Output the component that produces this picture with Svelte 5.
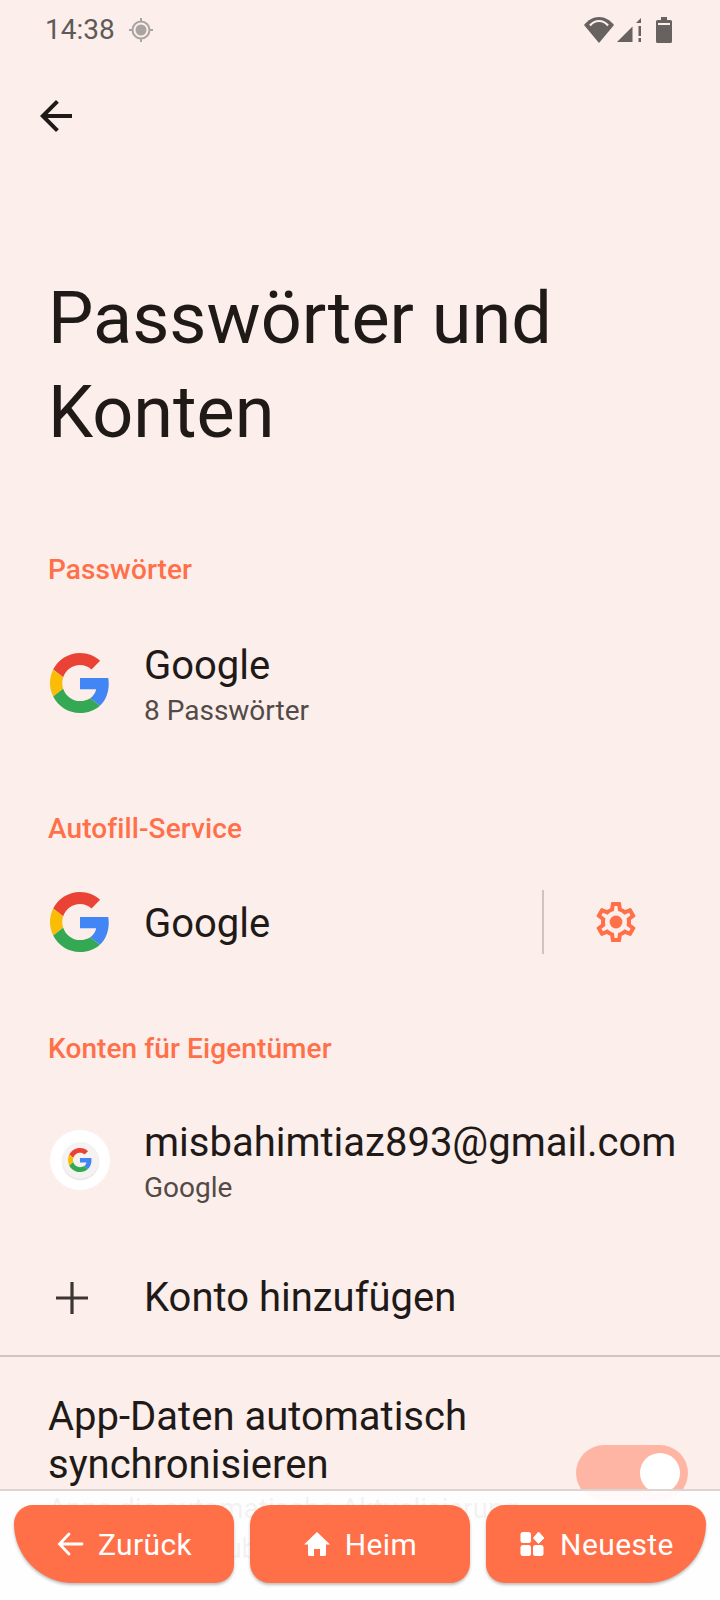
<script>
  const buttons = [
    { label: 'Zurück', icon: 'back', cls: 'first' },
    { label: 'Heim', icon: 'home', cls: '' },
    { label: 'Neueste', icon: 'recent', cls: 'last' },
  ];
</script>

{#snippet gLogo(size)}
  <svg width={size} height={size} viewBox="0 0 48 48">
    <path fill="#ea4335" d="M24 9.5c3.54 0 6.71 1.22 9.21 3.6l6.85-6.85C35.9 2.38 30.47 0 24 0 14.62 0 6.51 5.38 2.56 13.22l7.98 6.19C12.43 13.72 17.74 9.5 24 9.5z"/>
    <path fill="#4285f4" d="M46.98 24.55c0-1.57-.15-3.09-.38-4.55H24v9.02h12.94c-.58 2.96-2.26 5.48-4.78 7.18l7.73 6c4.51-4.18 7.09-10.36 7.09-17.65z"/>
    <path fill="#fbbc05" d="M10.53 28.59c-.48-1.45-.76-2.99-.76-4.59s.27-3.14.76-4.59l-7.98-6.19C.92 16.46 0 20.12 0 24c0 3.88.92 7.54 2.56 10.78l7.97-6.19z"/>
    <path fill="#34a853" d="M24 48c6.48 0 11.93-2.13 15.89-5.81l-7.73-6c-2.15 1.45-4.92 2.3-8.16 2.3-6.26 0-11.57-4.22-13.47-9.91l-7.98 6.19C6.51 42.62 14.62 48 24 48z"/>
  </svg>
{/snippet}

<div class="screen">
  <div class="status">
    <span class="time">14:38</span>
    <svg class="loc" width="26" height="26" viewBox="0 0 26 26">
      <circle cx="13" cy="13" r="8.5" fill="none" stroke="#a9a3a1" stroke-width="2"/>
      <circle cx="13" cy="13" r="5.5" fill="#a9a3a1"/>
      <path d="M13 1v4M13 21v4M1 13h4M21 13h4" stroke="#a9a3a1" stroke-width="2"/>
    </svg>
    <div class="status-right">
      <svg width="30" height="26" viewBox="0 0 30 26">
        <path d="M15 26 0 8C4 3 9 0 15 0s11 3 15 8z" fill="#676260"/>
        <path d="M6 8.5C8.500 5.500 11.500 4 15 4s6.500 1.500 9 4.500" fill="none" stroke="#fceeea" stroke-width="2.200"/>
      </svg>
      <svg width="25" height="26" viewBox="0 0 25 26">
        <path d="M0 25 15.500 9.500V25z" fill="#676260"/>
        <path d="M19 6 24 1v5z" fill="#676260"/>
        <rect x="21.500" y="9" width="2.500" height="10" fill="#676260"/>
        <rect x="21.500" y="21" width="2.500" height="4" fill="#676260"/>
      </svg>
      <svg class="batt" width="16" height="26" viewBox="0 0 16 26">
        <path d="M5 0h6v3h3.500a1.500 1.500 0 0 1 1.500 1.500V24.500a1.500 1.500 0 0 1-1.500 1.500H1.500A1.500 1.500 0 0 1 0 24.500V4.500A1.500 1.500 0 0 1 1.500 3H5z" fill="#676260"/>
        <rect x="2" y="6" width="12" height="2" fill="#fceeea"/>
      </svg>
    </div>
  </div>

  <div class="toolbar">
    <svg width="48" height="48" viewBox="0 0 24 24">
      <path fill="#1f1a18" d="M20 11H7.830l5.590-5.590L12 4l-8 8 8 8 1.410-1.410L7.830 13H20v-2z"/>
    </svg>
  </div>

  <h1>Passwörter und Konten</h1>

  <h2 class="first-head">Passwörter</h2>
  <div class="row two-line">
    <div class="icon">{@render gLogo(60)}</div>
    <div class="texts">
      <div class="title">Google</div>
      <div class="sub">8 Passwörter</div>
    </div>
  </div>

  <h2 class="autofill-head">Autofill-Service</h2>
  <div class="row autofill">
    <div class="icon">{@render gLogo(60)}</div>
    <div class="grow"><div class="title">Google</div></div>
    <div class="vline"></div>
    <svg class="gear" width="48" height="48" viewBox="0 0 24 24">
      <path fill="#ff7049" fill-rule="evenodd" d="M19.430 12.980c.04-.32.07-.64.07-.98 0-.34-.03-.66-.07-.98l2.110-1.650c.19-.15.24-.42.12-.64l-2-3.460c-.09-.16-.26-.25-.44-.25-.06 0-.12.01-.17.03l-2.490 1c-.52-.4-1.080-.73-1.690-.98l-.38-2.650C14.460 2.180 14.250 2 14 2h-4c-.25 0-.46.18-.49.42l-.38 2.650c-.61.25-1.170.59-1.690.98l-2.490-1c-.06-.02-.12-.03-.18-.03-.17 0-.34.09-.43.25l-2 3.460c-.13.22-.07.49.12.64l2.110 1.650c-.04.32-.07.65-.07.98 0 .33.03.66.07.98l-2.110 1.650c-.19.15-.24.42-.12.64l2 3.460c.09.16.26.25.44.25.06 0 .12-.01.17-.03l2.490-1c.52.4 1.080.73 1.690.98l.38 2.650c.03.24.24.42.49.42h4c.25 0 .46-.18.49-.42l.38-2.650c.61-.25 1.170-.59 1.690-.98l2.490 1c.06.02.12.03.18.03.17 0 .34-.09.43-.25l2-3.460c.12-.22.07-.49-.12-.64l-2.110-1.650zm-1.980-1.710c.04.31.05.52.05.73 0 .21-.02.43-.05.73l-.14 1.130.89.7 1.080.84-.7 1.210-1.270-.51-1.040-.42-.9.68c-.43.32-.84.56-1.250.73l-1.060.43-.16 1.130-.2 1.350h-1.400l-.19-1.350-.16-1.130-1.060-.43c-.43-.18-.83-.41-1.230-.71l-.91-.7-1.060.43-1.270.51-.7-1.210 1.080-.84.89-.7-.14-1.130c-.03-.31-.05-.54-.05-.74s.02-.43.05-.73l.14-1.130-.89-.7-1.080-.84.7-1.210 1.270.51 1.040.42.9-.68c.43-.32.84-.56 1.250-.73l1.060-.43.16-1.130.2-1.350h1.390l.19 1.350.16 1.130 1.060.43c.43.18.83.41 1.230.71l.91.7 1.060-.43 1.270-.51.7 1.210-1.070.85-.89.7.14 1.130z"/>
      <circle cx="12" cy="12" r="3.200" fill="#ff7049"/>
    </svg>
  </div>

  <h2 class="konten-head">Konten für Eigentümer</h2>
  <div class="row two-line account">
    <div class="icon">
      <div class="avatar">
        <div class="avatar-inner">{@render gLogo(24)}</div>
      </div>
    </div>
    <div class="texts">
      <div class="title">misbahimtiaz893@gmail.com</div>
      <div class="sub">Google</div>
    </div>
  </div>

  <div class="row add">
    <div class="icon plus">
      <svg width="48" height="48" viewBox="0 0 48 48">
        <path d="M24 8v32M8 24h32" stroke="#3c3533" stroke-width="3.200"/>
      </svg>
    </div>
    <div class="title">Konto hinzufügen</div>
  </div>

  <div class="hline"></div>

  <div class="sync">
    <div class="sync-text">
      <div class="title sync-title">App-Daten automatisch synchronisieren</div>
      <div class="sub sync-sub">Apps die automatische Aktualisierung von Daten erlauben</div>
    </div>
    <div class="switch"><div class="thumb"></div></div>
  </div>

  <div class="bottom">
    {#each buttons as b}
      <div class="btn {b.cls}">
        {#if b.icon === 'back'}
          <svg width="28" height="28" viewBox="0 0 28 28">
            <path d="M26 14H4M13 4 3.500 14 13 24" fill="none" stroke="#fff" stroke-width="2.800" stroke-linecap="round"/>
          </svg>
        {:else if b.icon === 'home'}
          <svg width="28" height="28" viewBox="0 0 28 28">
            <path fill="#fff" d="M14 2 1 14.500H5v10A1.500 1.500 0 0 0 6.500 26H11v-7h6v7h4.500a1.500 1.500 0 0 0 1.500-1.500v-10h4z"/>
          </svg>
        {:else}
          <svg width="28" height="28" viewBox="0 0 28 28">
            <rect x="2.500" y="2" width="10.500" height="11" rx="2.500" fill="#fff"/>
            <path d="M20.500 2 26 8l-5.500 5.500L15.500 8z" fill="#fff" stroke="#fff" stroke-linejoin="round"/>
            <rect x="2.500" y="15" width="10.500" height="11" rx="2.500" fill="#fff"/>
            <rect x="15" y="15" width="10.500" height="11" rx="2.500" fill="#fff"/>
          </svg>
        {/if}
        <span>{b.label}</span>
      </div>
    {/each}
  </div>
</div>

<style>
  :global(body) {
    background: #fceeea;
  }

  .screen {
    position: relative;
    height: 1600px;
    overflow: hidden;
    background: #fceeea;
    font-family: Roboto, sans-serif;
    color: #1f1a18;
  }

  .status {
    display: flex;
    align-items: center;
    height: 60px;
    padding: 0 48px 0 45px;
    color: #5f5a58;
  }

  .time {
    font-size: 28px;
    line-height: 60px;
  }

  .loc {
    margin-left: 13px;
  }

  .status-right {
    margin-left: auto;
    display: flex;
    align-items: center;
    gap: 3px;
  }

  .batt {
    margin-left: 11px;
  }

  .toolbar {
    height: 48px;
    padding: 32px 0 0 32px;
  }

  h1 {
    margin: 0;
    padding: 132px 48px 0;
    font-size: 72px;
    font-weight: 400;
    line-height: 94px;
    width: 560px;
  }

  h2 {
    margin: 0;
    padding: 0 48px;
    font-size: 28px;
    font-weight: 500;
    line-height: 36px;
    letter-spacing: 0.1px;
    color: #ff7049;
  }

  .first-head {
    margin-top: 92px;
  }

  .autofill-head {
    margin-top: 33px;
  }

  .konten-head {
    margin-top: 59px;
  }

  .row {
    display: flex;
    align-items: center;
    padding: 0 48px;
  }

  .two-line {
    height: 190px;
  }

  .account {
    margin-top: -2px;
  }

  .autofill {
    height: 100px;
    margin-top: 25px;
    padding-right: 80px;
  }

  .add {
    height: 100px;
    margin-top: -7px;
  }

  .icon {
    width: 96px;
    flex-shrink: 0;
    display: flex;
  }

  .icon :global(svg) {
    margin-left: 2px;
  }

  .plus :global(svg) {
    margin-left: 0;
  }

  .avatar {
    width: 60px;
    height: 60px;
    margin-left: 2px;
    border-radius: 50%;
    background: #fff;
    display: flex;
    align-items: center;
    justify-content: center;
  }

  .avatar-inner {
    width: 37px;
    height: 37px;
    border-radius: 50%;
    background: #f4f3f2;
    box-shadow: 0 1px 1px #dedcdb;
    display: flex;
    align-items: center;
    justify-content: center;
  }

  .avatar-inner :global(svg) {
    margin-left: 0;
  }

  .texts {
    white-space: nowrap;
    padding-top: 6px;
  }

  .grow {
    flex: 1;
    padding-top: 3px;
  }

  .title {
    font-size: 40px;
    line-height: 50px;
  }

  .sub {
    font-size: 28px;
    line-height: 40px;
    color: #534a47;
  }

  .vline {
    width: 2px;
    height: 64px;
    background: #cfc4c0;
    margin-right: 48px;
  }

  .hline {
    height: 2px;
    background: #cfc4c0;
    margin-top: 7px;
  }

  .sync {
    display: flex;
    align-items: center;
    padding: 36px 32px 0 48px;
  }

  .sync-text {
    flex: 1;
  }

  .sync-title {
    width: 500px;
    line-height: 48px;
  }

  .sync-sub {
    width: 490px;
  }

  .switch {
    width: 112px;
    height: 56px;
    margin-bottom: 16px;
    border-radius: 28px;
    background: #ffb5a3;
    display: flex;
    align-items: center;
    justify-content: flex-end;
    padding-right: 8px;
    box-sizing: border-box;
  }

  .thumb {
    width: 40px;
    height: 40px;
    border-radius: 50%;
    background: #fff;
  }

  .bottom {
    position: absolute;
    left: 0;
    right: 0;
    bottom: 0;
    height: 111px;
    box-sizing: border-box;
    padding: 14px 14px 0;
    display: flex;
    gap: 16px;
    background: rgba(255, 255, 255, 0.93);
    border-top: 2px solid #ddd3d0;
  }

  .btn {
    flex: 1;
    height: 78px;
    border-radius: 20px;
    background: #ff7049;
    color: #fff;
    display: flex;
    align-items: center;
    justify-content: center;
    gap: 14px;
    font-size: 30px;
    font-weight: 400;
    letter-spacing: 0.4px;
    box-shadow: 0 2px 3px rgba(0, 0, 0, 0.25);
  }

  .first {
    border-bottom-left-radius: 64px;
  }

  .last {
    border-bottom-right-radius: 64px;
  }
</style>
